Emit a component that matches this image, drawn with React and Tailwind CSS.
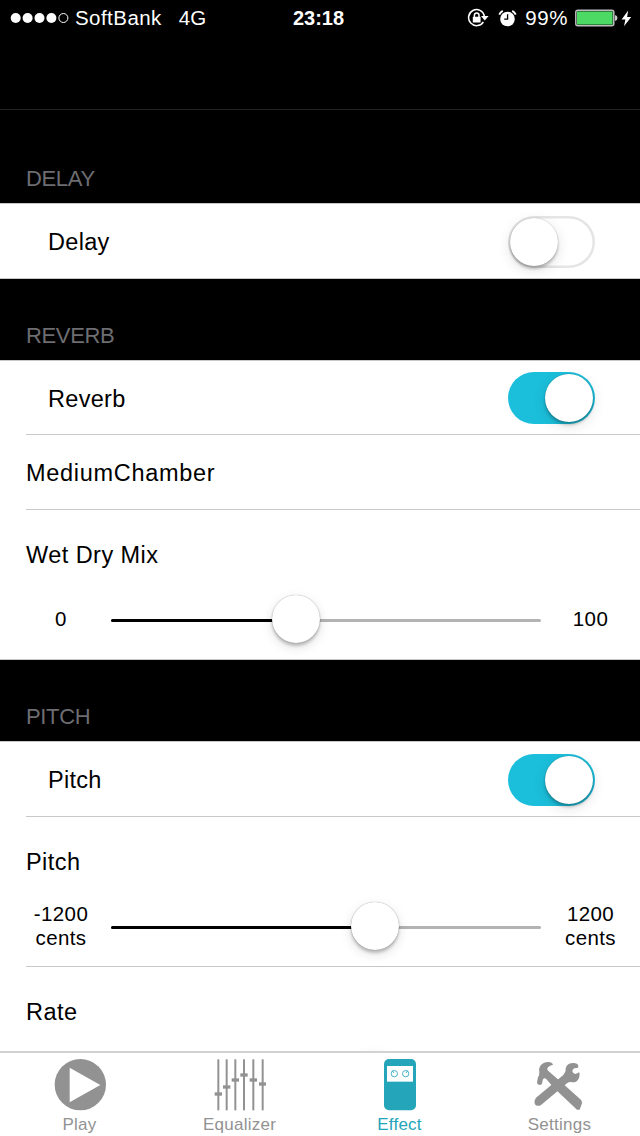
import { useState } from 'react';

const SectionHeader = ({ title, className }) => (
  <div className={`flex items-end bg-black pl-[26px] text-[22px] leading-[26px] tracking-[-0.35px] text-[#6d6d72] ${className}`}>
    {title}
  </div>
);

const Switch = ({ checked, onChange }) => (
  <button
    type="button"
    role="switch"
    aria-checked={checked}
    onClick={() => onChange(!checked)}
    className={`flex h-[52px] w-[87px] items-center rounded-full px-[2px] ${
      checked ? 'justify-end bg-[#1bbfdb]' : 'justify-start bg-white shadow-[inset_0_0_0_2.5px_#e5e5e5]'
    }`}
  >
    <span className="h-[48px] w-[48px] rounded-full bg-white shadow-[0_3px_3px_rgba(0,0,0,0.22),0_4px_14px_rgba(0,0,0,0.12),0_0_1px_rgba(0,0,0,0.35)]" />
  </button>
);

const SwitchRow = ({ label, checked, onChange, className = 'h-[74px]' }) => (
  <div className={`flex items-center justify-between pt-[1px] pr-[45px] pl-[48px] ${className}`}>
    <span className="pt-[3px] tracking-[0.3px]">{label}</span>
    <Switch checked={checked} onChange={onChange} />
  </div>
);

const Divider = () => <div className="ml-[26px] h-px bg-[#c8c7cc]" />;

const SliderRow = ({ label, min, max, value }) => (
  <div className="h-[149px] pt-[31px]">
    <div className="pl-[26px] leading-[28px] tracking-[0.45px]">{label}</div>
    <div className="mt-[24px] flex h-[52px] items-center text-center text-[20.5px] leading-[24px] tracking-[0.4px]">
      <div className="w-[111px] pr-[18px] pl-[29px]">{min}</div>
      <div className="relative h-[48px] w-[430px]">
        <div className="mt-[24px] flex h-[3px] overflow-hidden rounded-full bg-[#b3b3b3]">
          <div className="bg-black" style={{ width: value }} />
        </div>
        <span
          className="absolute top-0 h-[48px] w-[48px] -translate-x-1/2 rounded-full bg-white shadow-[0_3px_3px_rgba(0,0,0,0.2),0_4px_12px_rgba(0,0,0,0.13),0_0_1px_rgba(0,0,0,0.45)]"
          style={{ left: value }}
        />
      </div>
      <div className="w-[99px] px-[20px]">{max}</div>
    </div>
  </div>
);

const StatusBar = () => (
  <div className="grid h-[36px] grid-cols-[1fr_auto_1fr] items-center text-[20.5px] leading-[24px] text-white">
    <div className="flex items-center pl-[10px]">
      <svg width="60" height="12" viewBox="0 0 60 12" fill="#fff">
        <circle cx="5.7" cy="6" r="5" />
        <circle cx="17.6" cy="6" r="5" />
        <circle cx="29.5" cy="6" r="5" />
        <circle cx="41.4" cy="6" r="5" />
        <circle cx="53.4" cy="6" r="4.5" fill="none" stroke="#fff" strokeWidth="1" />
      </svg>
      <span className="ml-[5px] tracking-[0.45px]">SoftBank</span>
      <span className="ml-[17px]">4G</span>
    </div>
    <div className="pr-[3px] text-[20px] font-bold">23:18</div>
    <div className="flex items-center justify-end pr-[8px]">
      <svg width="22" height="20" viewBox="0 0 22 20" fill="none" stroke="#fff" strokeWidth="1.5">
        <path d="M16.4 13.8A8 8 0 1 1 17.4 8" />
        <path d="M14 8h7.6l-3.8 4.6z" fill="#fff" stroke="none" />
        <path d="M7.4 9V7.2a2.3 2.3 0 0 1 4.6 0V9" />
        <rect x="5.8" y="8.8" width="7.8" height="5.7" rx="0.6" fill="#fff" stroke="none" />
      </svg>
      <svg className="ml-[9px]" width="19" height="19" viewBox="0 0 19 19" fill="none" stroke="#fff">
        <circle cx="9.5" cy="10" r="7.3" fill="#fff" stroke="none" />
        <path d="M1.3 5.6A8 8 0 0 1 4.8 1.9M14.2 1.9a8 8 0 0 1 3.5 3.7" strokeWidth="2" />
        <path d="M9.6 5.2v5H6.2" stroke="#000" strokeWidth="1.3" />
      </svg>
      <span className="ml-[8px] tracking-[0.6px]">99%</span>
      <svg className="ml-[7px]" width="43" height="18" viewBox="0 0 43 18">
        <rect x="0.8" y="1.2" width="38" height="15.6" rx="2" fill="#000" stroke="#bdbdbd" strokeWidth="1.5" />
        <rect x="2" y="2.4" width="35.6" height="13.2" fill="#4cd964" />
        <path d="M40 6q2.5 0.7 2.5 3T40 12z" fill="#c8c8c8" />
      </svg>
      <svg className="ml-[3px]" width="11" height="17" viewBox="0 0 11 17" fill="#fff">
        <path d="M7.2 0.5L0.6 9.5h3.8L3 16.3l7.2-9.4H6.1z" />
      </svg>
    </div>
  </div>
);

const TabIcon = ({ children }) => (
  <svg width="52" height="52" viewBox="162 69 156 156" fill="currentColor">
    {children}
  </svg>
);

const faders = [
  [175, 174],
  [200, 153],
  [226, 132],
  [252, 117],
  [280, 132],
  [308, 144],
];

const tabs = [
  {
    name: 'Play',
    icon: (
      <TabIcon>
        <circle cx="241" cy="146" r="77" />
        <path d="M209 95v104l92-52z" fill="#fff" />
      </TabIcon>
    ),
  },
  {
    name: 'Equalizer',
    icon: (
      <TabIcon>
        {faders.map(([x, y]) => (
          <g key={x}>
            <rect x={x - 3} y="70" width="6" height="153" />
            <rect x={x - 11} y={y - 5} width="22" height="10" />
          </g>
        ))}
      </TabIcon>
    ),
  },
  {
    name: 'Effect',
    icon: (
      <TabIcon>
        <rect x="192" y="69" width="96" height="154" rx="15" />
        <path d="M201 90h78v47h-78z" fill="#fff" />
        <g fill="none" stroke="currentColor" strokeWidth="2.5">
          <circle cx="223" cy="113" r="9.5" />
          <circle cx="257" cy="113" r="9.5" />
          <path d="M222 111l-5-7M258 111l5-7" />
        </g>
      </TabIcon>
    ),
  },
  {
    name: 'Settings',
    icon: (
      <TabIcon>
        {/* hammer */}
        <path d="M219 86Q216 78 205 78Q189 79 181 89Q176 96 178 108Q179 116 174 124L171 139Q172 147 180 147L186 144L188 132Q191 124 198 128L222 156L291 221L299 221L306 202Q308 196 301 190L244 139L206 106Q199 101 204 94Q209 88 219 86Z" />
        {/* wrench */}
        <path d="M291 83Q282 79 272 82Q259 86 257 98Q258 109 250 117L168 185Q160 197 166 206Q174 213 184 206L261 142Q268 136 277 139Q290 140 296 128Q300 119 298 109L286 114Q278 113 277 106Q277 100 283 97L294 95Q297 88 291 83Z" />
      </TabIcon>
    ),
  },
];

const App = () => {
  const [delay, setDelay] = useState(false);
  const [reverb, setReverb] = useState(true);
  const [pitch, setPitch] = useState(true);
  const [activeTab, setActiveTab] = useState('Effect');

  return (
    <div className="flex h-[1136px] w-[640px] flex-col overflow-hidden bg-black font-['Liberation_Sans',Arial,sans-serif] text-[23.5px] text-black">
      <header className="h-[110px] shrink-0 border-b border-[#222]">
        <StatusBar />
      </header>

      <main className="min-h-0 flex-1 overflow-hidden bg-white">
        <SectionHeader title="DELAY" className="h-[93px] pb-[11px]" />
        <div className="border-y border-[#c8c7cc]">
          <SwitchRow label="Delay" checked={delay} onChange={setDelay} />
        </div>

        <SectionHeader title="REVERB" className="h-[81px] pb-[11px]" />
        <div className="border-y border-[#c8c7cc]">
          <SwitchRow label="Reverb" checked={reverb} onChange={setReverb} className="h-[73px]" />
          <Divider />
          <div className="flex h-[74px] items-center pt-[3px] pl-[26px] tracking-[0.7px]">MediumChamber</div>
          <Divider />
          <SliderRow label="Wet Dry Mix" min="0" max="100" value="43%" />
        </div>

        <SectionHeader title="PITCH" className="h-[81px] pb-[11px]" />
        <div className="border-t border-[#c8c7cc]">
          <SwitchRow label="Pitch" checked={pitch} onChange={setPitch} />
          <Divider />
          <SliderRow label="Pitch" min="-1200 cents" max="1200 cents" value="61.4%" />
          <Divider />
          <SliderRow label="Rate" value="61.4%" />
        </div>
      </main>

      <nav className="grid h-[85px] shrink-0 grid-cols-4 border-t-2 border-[#d2d2d2] bg-white">
        {tabs.map((tab) => (
          <button
            key={tab.name}
            type="button"
            onClick={() => setActiveTab(tab.name)}
            className={`flex flex-col items-center pt-[6px] text-[17px] leading-[20px] tracking-[0.25px] ${
              activeTab === tab.name ? 'text-[#25a5b9]' : 'text-[#929292]'
            }`}
          >
            {tab.icon}
            <span className="mt-[4px] pr-[1px]">{tab.name}</span>
          </button>
        ))}
      </nav>
    </div>
  );
};

export default App;
